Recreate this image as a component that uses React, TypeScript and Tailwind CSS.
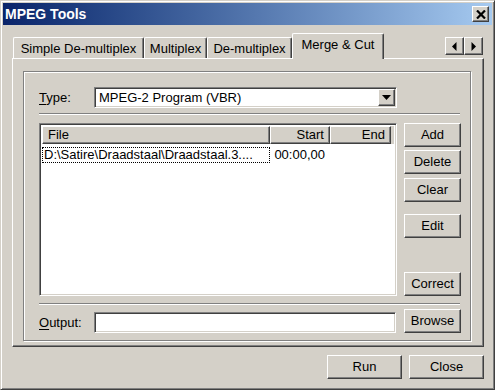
import React from "react";

/* ── Classic 3D borders ── */
const raised =
  "border border-t-white border-l-white border-r-[#404040] border-b-[#404040] shadow-[inset_-1px_-1px_#808080] bg-[#d4d0c8]";
const sunken =
  "border border-t-[#808080] border-l-[#808080] border-r-white border-b-white shadow-[inset_1px_1px_#404040,inset_-1px_-1px_#d4d0c8] bg-white";
const etchedLine = "border-t border-t-[#808080] border-b border-b-white";

function Btn({ label, className = "w-[57px]" }: { label: string; className?: string }) {
  return (
    <div className={`${raised} flex h-[24px] items-center justify-center text-black ${className}`}>
      {label}
    </div>
  );
}

function Tab({ label, w, active }: { label: string; w: string; active?: boolean }) {
  return (
    <div
      className={`flex items-center justify-center rounded-t-[2px] border-l border-t border-l-white border-t-white border-r border-r-[#404040] bg-[#d4d0c8] shadow-[inset_-1px_0_#808080] ${w} ${
        active ? "relative z-10 -mb-[1px] h-[26px] pb-[3px]" : "h-[21px] pt-[1px]"
      }`}
    >
      {label}
    </div>
  );
}

function Arrow({ dir }: { dir: "left" | "right" }) {
  return (
    <div className={`${raised} flex h-[18px] w-[19px] items-center justify-center`}>
      <svg width="5" height="9" viewBox="0 0 5 9">
        {dir === "left" ? (
          <polygon points="4.5,0 4.5,9 0,4.5" fill="#000" />
        ) : (
          <polygon points="0.5,0 0.5,9 5,4.5" fill="#000" />
        )}
      </svg>
    </div>
  );
}

export default function App() {
  return (
    <div className="flex h-[390px] w-[495px] flex-col border border-t-[#d4d0c8] border-l-[#d4d0c8] border-r-[#404040] border-b-[#404040] bg-[#d4d0c8] p-[2px] font-['Liberation_Sans',Arial,sans-serif] text-[13px] text-black shadow-[inset_1px_1px_#fff,inset_-1px_-1px_#808080]">
      {/* Title bar */}
      <div className="flex h-[22px] items-center justify-between bg-gradient-to-r from-[#0a246a] to-[#a6caf0] pl-[2px] pr-[3px]">
        <span className="text-[14px] font-bold text-white">MPEG Tools</span>
        <div className={`${raised} flex h-[16px] w-[17px] items-center justify-center`}>
          <svg width="10" height="9" viewBox="0 0 10 9">
            <path d="M1 0.5 L9 8.5 M9 0.5 L1 8.5" stroke="#000" strokeWidth="2.2" />
          </svg>
        </div>
      </div>

      {/* Body */}
      <div className="flex flex-col pl-[9px] pt-[8px]">
        {/* Tabs */}
        <div className="flex h-[25px] w-[472px] items-end">
          <div className="ml-[1px] flex items-end">
            <Tab label="Simple De-multiplex" w="w-[131px]" />
            <Tab label="Multiplex" w="w-[63px]" />
            <Tab label="De-multiplex" w="w-[85px]" />
            <Tab label="Merge & Cut" w="w-[92px]" active />
          </div>
          <div className="mr-[1px] ml-auto flex self-start pt-[4px]">
            <Arrow dir="left" />
            <Arrow dir="right" />
          </div>
        </div>

        {/* Tab panel */}
        <div className="h-[289px] w-[472px] border border-t-white border-l-white border-r-[#404040] border-b-[#404040] pl-[10px] pt-[12px] shadow-[inset_-1px_-1px_#808080]">
          <div className="flex h-[270px] w-[448px] flex-col border border-[#808080] pl-[15px] pt-[15px] shadow-[inset_1px_1px_#fff,1px_1px_#fff]">
            {/* Type row */}
            <div className="flex h-[21px] items-center">
              <span className="w-[55px]">
                <u className="underline-offset-2">T</u>ype:
              </span>
              <div className={`${sunken} flex h-[21px] w-[303px] items-center justify-between pl-[4px] pr-[1px]`}>
                <span>MPEG-2 Program (VBR)</span>
                <div className={`${raised} flex h-[17px] w-[17px] items-center justify-center`}>
                  <svg width="9" height="5" viewBox="0 0 9 5">
                    <polygon points="0,0 9,0 4.5,5" fill="#000" />
                  </svg>
                </div>
              </div>
            </div>

            <div className={`${etchedLine} mt-[5px] w-[421px]`} />

            {/* List + buttons */}
            <div className="mt-[8px] flex">
              <div className={`${sunken} flex h-[173px] w-[358px] flex-col p-[2px]`}>
                <div className="flex h-[18px] bg-[#d4d0c8]">
                  <div className={`${raised} flex w-[228px] items-center pl-[5px]`}>File</div>
                  <div className={`${raised} flex w-[60px] items-center justify-end pr-[5px]`}>Start</div>
                  <div className={`${raised} flex w-[61px] items-center justify-end pr-[5px]`}>End</div>
                </div>
                <div className="mt-[2px] flex h-[17px] items-center">
                  <div className="flex h-[16px] w-[228px] items-center border border-dotted border-black pl-[1px]">
                    D:\Satire\Draadstaal\Draadstaal.3....
                  </div>
                  <div className="w-[60px] pr-[5px] text-right">00:00,00</div>
                </div>
              </div>
              <div className="ml-[7px] flex flex-col">
                <Btn label="Add" />
                <Btn label="Delete" className="mt-[3px] w-[57px]" />
                <Btn label="Clear" className="mt-[4px] w-[57px]" />
                <Btn label="Edit" className="mt-[12px] w-[57px]" />
                <Btn label="Correct" className="mt-[34px] w-[57px]" />
              </div>
            </div>

            <div className={`${etchedLine} mt-[7px] w-[421px]`} />

            {/* Output row */}
            <div className="mt-[4px] flex h-[24px] items-end">
              <span className="flex h-[21px] w-[55px] items-center">
                <span>
                  <u className="underline-offset-2">O</u>utput:
                </span>
              </span>
              <div className={`${sunken} h-[21px] w-[302px]`} />
              <Btn label="Browse" className="ml-[8px] w-[57px]" />
            </div>
          </div>
        </div>

        {/* Bottom buttons */}
        <div className="mt-[8px] flex w-[472px] justify-end gap-[7px]">
          <Btn label="Run" className="w-[75px]" />
          <Btn label="Close" className="w-[75px]" />
        </div>
      </div>
    </div>
  );
}
